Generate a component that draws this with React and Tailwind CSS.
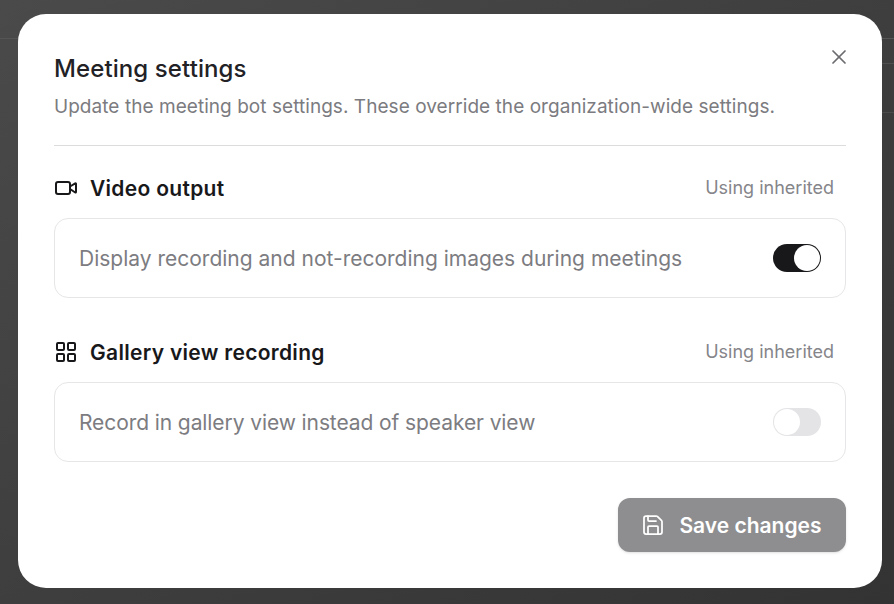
import React from "react";
import { X, Video, Save } from "lucide-react";

function GalleryIcon() {
  return (
    <svg width="24" height="24" viewBox="0 0 24 24" fill="none" stroke="currentColor" strokeWidth="2" className="text-[#18181b]">
      <rect x="3" y="3" width="7" height="7" rx="1" />
      <rect x="14" y="3" width="7" height="7" rx="1" />
      <rect x="3" y="14" width="7" height="7" rx="1" />
      <rect x="14" y="14" width="7" height="7" rx="1" />
    </svg>
  );
}

function Toggle({ on }) {
  return (
    <div
      className={
        "flex h-[28px] w-[48px] shrink-0 items-center rounded-full p-[1px] " +
        (on ? "justify-end bg-[#18181b]" : "justify-start bg-[#e4e4e7]")
      }
    >
      <div className="h-[26px] w-[26px] rounded-full bg-white" />
    </div>
  );
}

function Section({ icon, title, text, on, textClass }) {
  return (
    <section>
      <div className="flex h-[40px] items-center justify-between pr-[12px]">
        <div className="flex items-center gap-[12px]">
          {icon}
          <h3 className="pt-[2px] text-[21px] font-semibold tracking-[0.3px] text-[#18181b]">{title}</h3>
        </div>
        <span className="pb-[2px] text-[18px] text-[#85858a]">Using inherited</span>
      </div>
      <div className="mt-[10px] flex h-[80px] items-center justify-between rounded-[14px] border border-[#e6e6e8] px-[24px]">
        <span className={"pt-[2px] text-[21px] text-[#7c7c81] " + textClass}>{text}</span>
        <Toggle on={on} />
      </div>
    </section>
  );
}

export default function App() {
  return (
    <div
      className="relative h-[604px] w-[894px] overflow-hidden bg-gradient-to-br from-[#4a4a4a] to-[#333333]"
      style={{ fontFamily: '"Inter", "Noto Sans", sans-serif' }}
    >
      <div className="h-[39px] border-b border-[#555555]" />
      <div className="ml-auto h-[25px] w-[100px] border-b border-[#4f4f4f]" />
      <div className="ml-auto h-[49px] w-[100px] border-b border-[#4c4c4c]" />
      <div className="absolute left-[18px] top-[14px] h-[574px] w-[864px] rounded-[28px] bg-white px-[36px] pt-[36px]">
        <button className="absolute right-[31px] top-[31px] text-[#6b6b70]">
          <X size={24} strokeWidth={1.75} />
        </button>
        <h2 className="text-[24px] font-medium leading-[38px] tracking-[0.1px] text-[#222226]">Meeting settings</h2>
        <p className="mt-[3px] text-[19px] leading-[32px] tracking-[0.05px] text-[#7b7b80]">
          Update the meeting bot settings. These override the organization-wide settings.
        </p>
        <div className="mt-[22px] h-px bg-[#dcdcde]" />
        <div className="mt-[22px] flex flex-col gap-[34px]">
          <Section
            icon={<Video size={24} strokeWidth={2} className="text-[#18181b]" />}
            title="Video output"
            text="Display recording and not-recording images during meetings"
            textClass=""
            on
          />
          <Section
            icon={<GalleryIcon />}
            title="Gallery view recording"
            text="Record in gallery view instead of speaker view"
            textClass="tracking-[-0.09px]"
          />
        </div>
        <div className="mt-[36px] flex justify-end">
          <button className="flex h-[54px] w-[228px] items-center justify-center gap-[14px] rounded-[12px] bg-[#8e8e90] pr-[1px] text-[21px] font-semibold text-white shadow-sm">
            <Save size={24} strokeWidth={1.75} />
            <span className="pt-[2px]">Save changes</span>
          </button>
        </div>
      </div>
    </div>
  );
}
